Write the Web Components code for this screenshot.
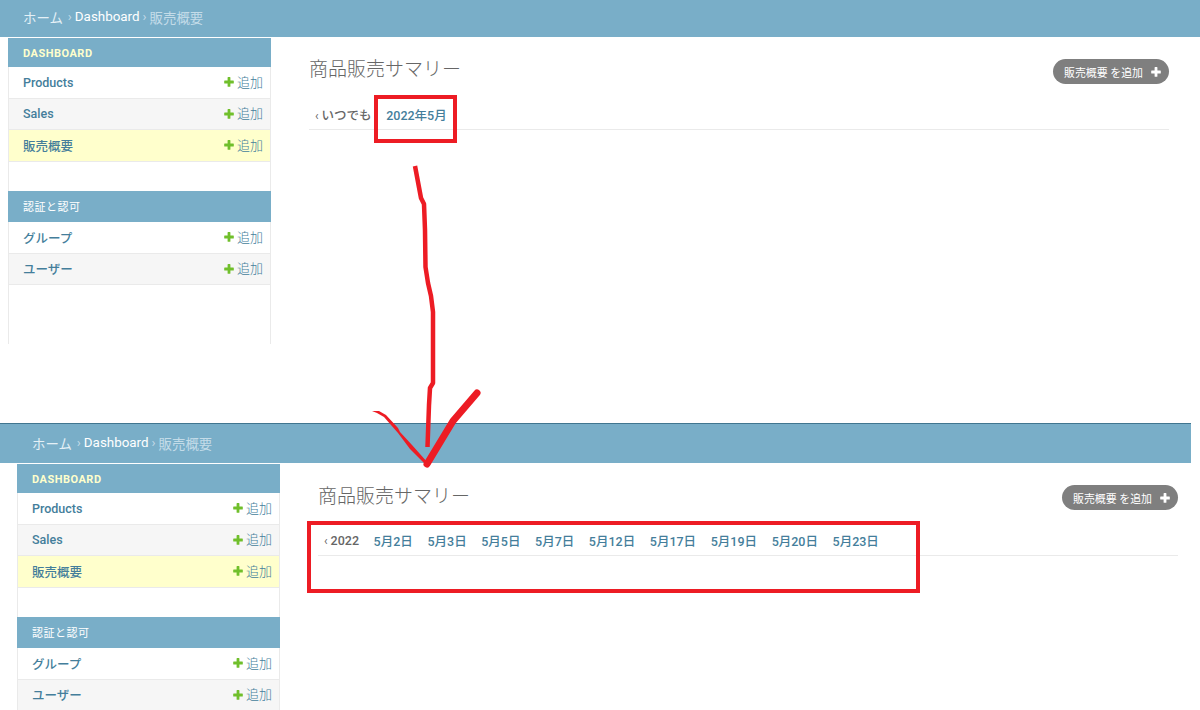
<!DOCTYPE html>
<html lang="ja">
<head>
<meta charset="utf-8">
<title>商品販売サマリー</title>
<style>
  html, body { margin: 0; padding: 0; background: #fff; }
  body {
    position: relative;
    width: 1200px;
    height: 710px;
    overflow: hidden;
    font-family: Roboto, "Noto Sans CJK JP", sans-serif;
    font-size: 13px;
    color: #333;
  }
  admin-shot.second { margin-top: 79px; }
  red-marks { position: absolute; left: 0; top: 0; }
</style>
</head>
<body>

<template id="app-row-tpl">
  <style>
    :host {
      display: flex;
      align-items: center;
      justify-content: space-between;
      height: 30.5px;
      box-sizing: content-box;
      padding: 0 7px 0 14px;
      border: 1px solid #eaeaea;
      border-width: 0 1px 1px;
      background: #fff;
      color: #447e9b;
      font-weight: 500;
      font-size: 12.5px;
    }
    :host([alt]) { background: #f6f6f6; }
    :host([current]) { background: #ffc; }
    .add { display: flex; align-items: center; gap: 3px; font-weight: 300; font-size: 13px; }
    .add span { margin-bottom: 2px; }
    svg { width: 10px; height: 10px; display: block; }
  </style>
  <span><slot></slot></span>
  <span class="add">
    <svg viewBox="0 0 10 10"><path fill="#70bf2b" d="M3.6 0.6q0-.5.5-.5h1.8q.5 0 .5.5v2.9h2.9q.5 0 .5.5v1.9q0 .5-.5.5h-2.9v2.9q0 .5-.5.5h-1.8q-.5 0-.5-.5v-2.9h-2.9q-.5 0-.5-.5v-1.9q0-.5.5-.5h2.9z"/></svg>
    <span>追加</span>
  </span>
</template>

<template id="app-module-tpl">
  <style>
    :host { display: block; margin: 0 -1px 29.5px; }
    .cap {
      height: 29px;
      box-sizing: border-box;
      padding: 2px 0 0 15px;
      display: flex;
      align-items: center;
      background: #79aec8;
      color: #fff;
      font-size: 11px;
      letter-spacing: .5px;
      font-weight: 400;
    }
    :host([current]) .cap { color: #ffc; font-weight: 700; }
    :host([tall]) .cap { height: 31px; padding-top: 0; padding-bottom: 1px; }
  </style>
  <div class="cap"><slot name="caption"></slot></div>
  <slot></slot>
</template>

<template id="date-nav-tpl">
  <style>
    :host {
      display: flex;
      align-items: center;
      gap: 14.6px;
      height: 29px;
      padding-left: 6px;
      border-bottom: 1px solid #eaeaea;
      color: #447e9b;
      font-weight: 500;
      font-size: 12.5px;
      margin-top: 16px;
    }
    .back { font-weight: 500; color: #666; }
    .chev { font-size: 12px; font-weight: 400; }
  </style>
  <span class="back"><span class="chev">‹ </span><slot name="back"></slot></span>
  <slot></slot>
</template>

<template id="admin-shot-tpl">
  <style>
    :host {
      display: block;
      width: var(--shot-width, 1200px);
      height: var(--shot-height, 344px);
      overflow: hidden;
      box-sizing: border-box;
    }
    .crumbs {
      height: var(--bar-height, 37px);
      box-sizing: border-box;
      display: flex;
      align-items: center;
      gap: 3px;
      padding-left: calc(var(--inset) + 15px);
      padding-bottom: var(--bar-pad, 4px);
      background: #79aec8;
      border-top: var(--bar-top, 0 solid transparent);
      color: #fff;
      font-size: 13.4px;
    }
    .crumbs .dim { color: #c4dce8; }
    .crumbs .home { color: #e4f0f6; margin-right: 2px; }
    .body { display: flex; height: 100%; padding-left: var(--inset); margin-top: 1px; }
    aside {
      width: 261px;
      flex: none;
      border-left: 1px solid #eaeaea;
      border-right: 1px solid #eaeaea;
    }
    main { flex: 1; padding: 0 var(--right) 0 38px; min-width: 0; }
    .head { display: flex; justify-content: space-between; align-items: flex-start; height: 46px; }
    h1 { margin: 0; padding-top: var(--title-top, 19px); font-size: 19px; font-weight: 300; line-height: 26px; color: #666; }
    .btn {
      margin-top: 21px;
      height: 25px;
      width: 116px;
      box-sizing: border-box;
      border-radius: 13px;
      background: #7f7f7f;
      color: #fff;
      font-size: 10.9px;
      display: flex;
      align-items: center;
      justify-content: flex-end;
      gap: 8px;
      padding-right: 8px;
    }
    .btn svg { width: 10px; height: 10px; display: block; }
  </style>
  <div class="crumbs">
    <span class="home">ホーム</span><span class="dim">›</span>
    <span>Dashboard</span><span class="dim">›</span>
    <span class="dim">販売概要</span>
  </div>
  <div class="body">
    <aside>
      <app-module current>
        <span slot="caption">DASHBOARD</span>
        <app-row>Products</app-row>
        <app-row alt>Sales</app-row>
        <app-row current>販売概要</app-row>
      </app-module>
      <app-module tall>
        <span slot="caption">認証と認可</span>
        <app-row>グループ</app-row>
        <app-row alt>ユーザー</app-row>
      </app-module>
    </aside>
    <main>
      <div class="head">
        <h1>商品販売サマリー</h1>
        <div class="btn">
          <span>販売概要 を追加</span>
          <svg viewBox="0 0 10 10"><path fill="#fff" d="M3.6 0.6q0-.5.5-.5h1.8q.5 0 .5.5v2.9h2.9q.5 0 .5.5v1.9q0 .5-.5.5h-2.9v2.9q0 .5-.5.5h-1.8q-.5 0-.5-.5v-2.9h-2.9q-.5 0-.5-.5v-1.9q0-.5.5-.5h2.9z"/></svg>
        </div>
      </div>
      <slot></slot>
    </main>
  </div>
</template>

<template id="red-marks-tpl">
  <style>
    :host { display: block; width: 1200px; height: 710px; pointer-events: none; }
    svg { display: block; }
  </style>
  <svg width="1200" height="710" viewBox="0 0 1200 710">
    <g fill="none" stroke="#ed1c24">
      <rect x="376" y="97" width="79" height="44" stroke-width="4"/>
      <rect x="309" y="523" width="609" height="68" stroke-width="4"/>
      <path stroke-width="4.5" stroke-linejoin="round"
        d="M415 166L418 182L421 198L424 204L425 230L425.500 267L428 283L431 296L433 312L433 383L430 388L429 405L427.500 447"/>
      <path stroke-width="7" stroke-linecap="round" stroke-linejoin="round"
        d="M477 393L453 421L427 464"/>
    </g>
    <path fill="#ed1c24" d="M372 411L379 411L386 415L398 428L400 432L412 445L428 463L426 465L410 449L398 433L384 417L377 413z"/>
  </svg>
</template>

<admin-shot style="--inset:8px;--right:31px;--shot-width:1200px;--shot-height:344px;--bar-height:37px">
  <date-nav>
    <span slot="back">いつでも</span>
    <span>2022年5月</span>
  </date-nav>
</admin-shot>

<admin-shot class="second" style="--inset:17px;--right:13px;--shot-width:1191px;--shot-height:287px;--bar-height:40px;--bar-top:1px solid #417690;--bar-pad:2px;--title-top:20px">
  <date-nav>
    <span slot="back">2022</span>
    <span>5月2日</span><span>5月3日</span><span>5月5日</span><span>5月7日</span><span>5月12日</span>
    <span>5月17日</span><span>5月19日</span><span>5月20日</span><span>5月23日</span>
  </date-nav>
</admin-shot>

<red-marks></red-marks>

<script>
function tplElement(name, tplId) {
  customElements.define(name, class extends HTMLElement {
    constructor() {
      super();
      this.attachShadow({mode: 'open'});
      this.shadowRoot.appendChild(document.getElementById(tplId).content.cloneNode(true));
    }
  });
}
tplElement('app-row', 'app-row-tpl');
tplElement('app-module', 'app-module-tpl');
tplElement('date-nav', 'date-nav-tpl');
tplElement('admin-shot', 'admin-shot-tpl');
tplElement('red-marks', 'red-marks-tpl');
</script>
</body>
</html>
